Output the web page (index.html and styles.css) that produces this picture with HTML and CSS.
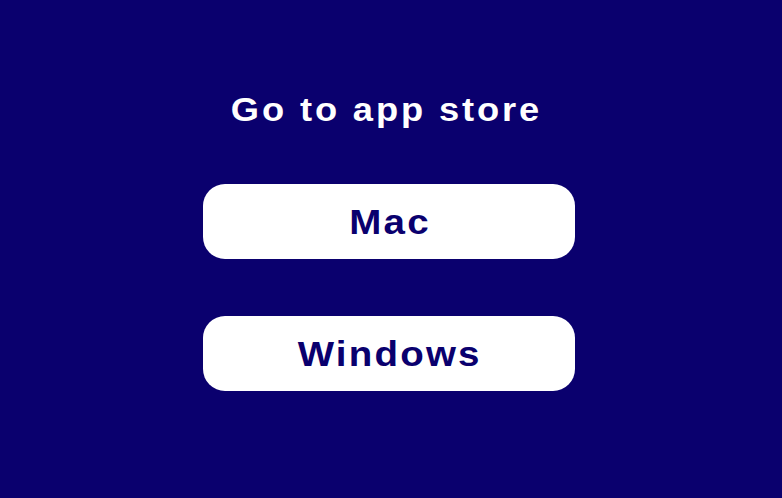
FILE: index.html
```html
<!DOCTYPE html>
<html lang="en">
<head>
<meta charset="utf-8">
<title>Go to app store</title>
<link rel="stylesheet" href="styles.css">
</head>
<body>
<main class="page">
  <h1 class="title"><span class="wide">Go to app store</span></h1>
  <div class="buttons">
    <a class="store-btn" href="#"><span class="wide">Mac</span></a>
    <a class="store-btn" href="#"><span class="wide">Windows</span></a>
  </div>
</main>
</body>
</html>
```
FILE: styles.css
```css
html, body {
  margin: 0;
  padding: 0;
  background: #0a006e;
}
.page {
  display: flex;
  flex-direction: column;
  align-items: center;
  padding-top: 90px;
  padding-right: 4px;
  font-family: "Liberation Sans", Arial, sans-serif;
}
.wide {
  display: inline-block;
  transform: scaleX(1.1);
}
.title {
  margin: 0;
  color: #ffffff;
  font-size: 33px;
  line-height: 40px;
  font-weight: 700;
  letter-spacing: 2.6px;
  padding-right: 5.4px;
}
.buttons {
  display: flex;
  flex-direction: column;
  gap: 57px;
  margin-top: 54px;
}
.store-btn {
  display: flex;
  align-items: center;
  justify-content: center;
  width: 372px;
  height: 75px;
  background: #ffffff;
  border-radius: 22px;
  color: #0a006e;
  text-decoration: none;
  font-size: 35px;
  font-weight: 700;
  letter-spacing: 2px;
  padding-left: 2px;
  box-sizing: border-box;
}
```
